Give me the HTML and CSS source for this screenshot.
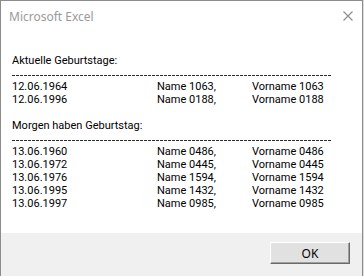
FILE: index.html
```html
<!DOCTYPE html>
<html lang="de">
<head>
<meta charset="utf-8">
<title>Microsoft Excel</title>
<link rel="stylesheet" href="styles.css">
</head>
<body>
<div class="window">
  <div class="titlebar">
    <span class="title">Microsoft Excel</span>
    <svg class="close" width="10" height="10" viewBox="0 0 10 10"><path d="M0.5 0.5 L9.5 9.5 M9.5 0.5 L0.5 9.5" stroke="#8a8a8a" stroke-width="1.1" fill="none"/></svg>
  </div>
  <div class="content">
    <div class="line">Aktuelle Geburtstage:</div>
    <div class="line dash"></div>
    <div class="row"><span>12.06.1964</span><span>Name 1063,</span><span>Vorname 1063</span></div>
    <div class="row"><span>12.06.1996</span><span>Name 0188,</span><span>Vorname 0188</span></div>
    <div class="line"></div>
    <div class="line">Morgen haben Geburtstag:</div>
    <div class="line dash"></div>
    <div class="row"><span>13.06.1960</span><span>Name 0486,</span><span>Vorname 0486</span></div>
    <div class="row"><span>13.06.1972</span><span>Name 0445,</span><span>Vorname 0445</span></div>
    <div class="row"><span>13.06.1976</span><span>Name 1594,</span><span>Vorname 1594</span></div>
    <div class="row"><span>13.06.1995</span><span>Name 1432,</span><span>Vorname 1432</span></div>
    <div class="row"><span>13.06.1997</span><span>Name 0985,</span><span>Vorname 0985</span></div>
  </div>
  <div class="footer">
    <button class="ok">OK</button>
  </div>
</div>
</body>
</html>
```
FILE: styles.css
```css
html, body {
  margin: 0;
  padding: 0;
}
body {
  width: 364px;
  height: 276px;
  background: #dcdcdc;
  font-family: "Noto Sans", "Open Sans", sans-serif;
  overflow: hidden;
}
.window {
  width: 363px;
  height: 276px;
  box-sizing: border-box;
  border-left: 1px solid #8c8c8c;
  border-top: 1px solid #8c8c8c;
  border-right: 1px solid #8c8c8c;
  background: #ffffff;
  display: flex;
  flex-direction: column;
}
.titlebar {
  height: 30px;
  display: flex;
  align-items: center;
  justify-content: space-between;
  padding: 0 9px 0 8px;
  box-sizing: border-box;
}
.title {
  font-size: 12px;
  color: #9a9a9a;
}
.close {
  display: block;
}
.content {
  padding: 23px 0 0 11px;
  flex: 1;
  font-family: Roboto, "Noto Sans", sans-serif;
  font-size: 11px;
  line-height: 13px;
  color: #000;
}
.line {
  height: 13px;
  white-space: nowrap;
}
.dash {
  width: 320px;
  background: repeating-linear-gradient(90deg, #2a2a2a 0 3px, transparent 3px 4px) 0 8px / 100% 1px no-repeat;
}
.row {
  height: 13px;
  display: grid;
  grid-template-columns: 145px 95px auto;
  white-space: nowrap;
}
.footer {
  height: 43px;
  background: #f0f0f0;
  display: flex;
  justify-content: flex-end;
  align-items: flex-start;
  padding: 9px 12px 0 0;
  box-sizing: border-box;
}
.ok {
  width: 80px;
  height: 22px;
  margin: 0;
  padding: 0;
  font-family: "Noto Sans", "Open Sans", sans-serif;
  font-size: 12px;
  color: #000;
  background: #e1e1e1;
  border: none;
  border-top: 1px solid #ffffff;
  border-left: 1px solid #ffffff;
  border-right: 1px solid #696969;
  border-bottom: 1px solid #696969;
  box-shadow: inset -1px -1px 0 #a0a0a0, inset 1px 1px 0 #e3e3e3;
  box-sizing: border-box;
}
```
